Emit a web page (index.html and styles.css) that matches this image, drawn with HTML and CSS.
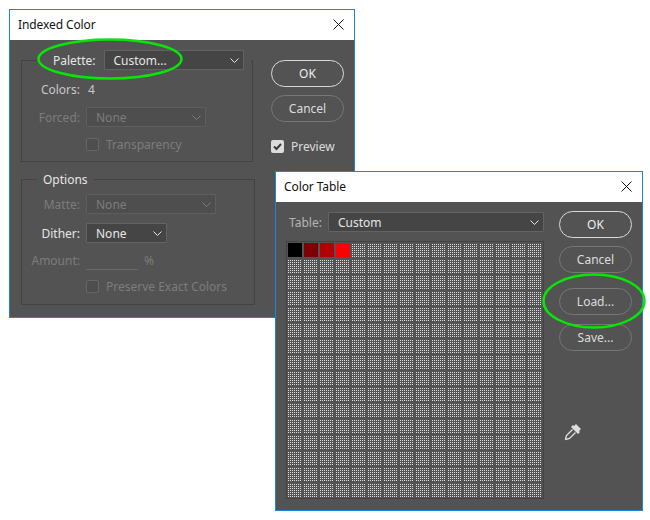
FILE: index.html
```html
<!DOCTYPE html>
<html lang="en">
<head>
    <meta charset="UTF-8">
    <title>Indexed Color and Color Table dialogs</title>
    <link rel="stylesheet" href="styles.css">
</head>
<body>

<div class="window indexed">
    <div class="titlebar">
        <span>Indexed Color</span>
        <svg class="close" viewBox="0 0 11 11"><path d="M0.5 0.5L10.5 10.5M10.5 0.5L0.5 10.5"/></svg>
    </div>
    <div class="panel indexed-panel">
        <div class="groups">
            <fieldset class="group palette-group">
                <legend class="palette-legend">
                    <span class="lbl bright">Palette:</span>
                    <div class="select palette-select bright"><span>Custom...</span><svg class="chev" viewBox="0 0 9 5"><path d="M0.5 0.5L4.5 4.5L8.5 0.5"/></svg></div>
                </legend>
                <div class="row colors-row"><span class="lbl wide colors-lbl">Colors:</span><span class="value">4</span></div>
                <div class="row forced-row">
                    <span class="lbl wide off">Forced:</span>
                    <div class="select forced-select off"><span>None</span><svg class="chev" viewBox="0 0 9 5"><path d="M0.5 0.5L4.5 4.5L8.5 0.5"/></svg></div>
                </div>
                <div class="row check-row off"><span class="box"></span><span>Transparency</span></div>
            </fieldset>
            <fieldset class="group options-group">
                <legend class="options-legend bright">Options</legend>
                <div class="row matte-row">
                    <span class="lbl wide off">Matte:</span>
                    <div class="select matte-select off"><span>None</span><svg class="chev" viewBox="0 0 9 5"><path d="M0.5 0.5L4.5 4.5L8.5 0.5"/></svg></div>
                </div>
                <div class="row dither-row">
                    <span class="lbl wide bright">Dither:</span>
                    <div class="select dither-select bright"><span>None</span><svg class="chev" viewBox="0 0 9 5"><path d="M0.5 0.5L4.5 4.5L8.5 0.5"/></svg></div>
                </div>
                <div class="row amount-row off">
                    <span class="lbl wide">Amount:</span><span class="field"></span><span>%</span>
                </div>
                <div class="row check-row exact-row off"><span class="box"></span><span>Preserve Exact Colors</span></div>
            </fieldset>
        </div>
        <div class="buttons indexed-buttons">
            <div class="btn primary">OK</div>
            <div class="btn">Cancel</div>
            <div class="preview">
                <svg class="checkbox" viewBox="0 0 13 13"><rect width="13" height="13" rx="2" fill="#dcdcdc"/><path d="M3 6.5L5.5 9L10 4" fill="none" stroke="#3a3a3a" stroke-width="2"/></svg>
                <span>Preview</span>
            </div>
        </div>
    </div>
</div>

<div class="window table">
    <div class="titlebar">
        <span>Color Table</span>
        <svg class="close" viewBox="0 0 11 11"><path d="M0.5 0.5L10.5 10.5M10.5 0.5L0.5 10.5"/></svg>
    </div>
    <div class="panel table-panel">
        <div class="table-main">
            <div class="row table-row">
                <span class="lbl">Table:</span>
                <div class="select table-select bright"><span>Custom</span><svg class="chev" viewBox="0 0 9 5"><path d="M0.5 0.5L4.5 4.5L8.5 0.5"/></svg></div>
            </div>
            <div class="swatches">
                <div class="swatch c1"></div>
                <div class="swatch c2"></div>
                <div class="swatch c3"></div>
                <div class="swatch c4"></div>
            </div>
        </div>
        <div class="buttons table-buttons">
            <div class="btn primary">OK</div>
            <div class="btn">Cancel</div>
            <div class="btn load-btn">Load...</div>
            <div class="btn">Save...</div>
            <svg class="dropper" viewBox="0 0 18 18">
                <path d="M12 1L17 6L15 8L16 9L14 11L7 4L9 2L10 3Z" fill="#dcdcdc"/>
                <path d="M8.5 6.5L2.5 12.5L1.5 16L2 16.5L5.5 15.5L11.5 9.5" fill="none" stroke="#dcdcdc" stroke-width="1.4"/>
            </svg>
        </div>
    </div>
</div>

<svg class="ring ring-palette" viewBox="0 0 146 42"><ellipse cx="73" cy="21" rx="71.5" ry="19.5"/></svg>
<svg class="ring ring-load" viewBox="0 0 104 56"><ellipse cx="52" cy="28" rx="50.5" ry="26.5"/></svg>

</body>
</html>
```

FILE: styles.css
```css
body {
    margin: 0;
    width: 650px;
    height: 520px;
    position: relative;
    overflow: hidden;
    background-color: #fff;
    font-family: "Noto Sans", sans-serif;
    font-size: 12px;
    color: #c8c8c8;
}
.window {
    position: absolute;
    box-sizing: border-box;
    border: 1px solid #1c86d6;
    display: flex;
    flex-direction: column;
    background-color: #535353;
}
.indexed {
    left: 9px;
    top: 9px;
    width: 346px;
    height: 309px;
}
.table {
    left: 275px;
    top: 171px;
    width: 368px;
    height: 340px;
}
.titlebar {
    height: 30px;
    flex: none;
    box-sizing: border-box;
    background-color: #fff;
    color: #111;
    display: flex;
    align-items: center;
    justify-content: space-between;
    padding: 0 10px 2px 8px;
    letter-spacing: -0.1px;
}
.close {
    width: 11px;
    height: 11px;
    stroke: #111;
    stroke-width: 1;
    fill: none;
}
.panel {
    flex: 1;
    display: flex;
}
.bright { color: #e6e6e6; }
.off { color: #7c7c7c; }
.row {
    display: flex;
    align-items: center;
}
.lbl { text-align: right; }
.wide {
    width: 58px;
    margin-right: 6px;
    flex: none;
}
.colors-lbl { margin-right: 8px; }
.groups {
    box-sizing: border-box;
    width: 246px;
    padding: 10px 0 0 11px;
    flex: none;
}
.group {
    box-sizing: border-box;
    border: 1px solid #434343;
    margin: 0;
    padding: 0;
    min-width: 0;
}
.palette-group {
    width: 232px;
    height: 112px;
}
.palette-legend {
    display: flex;
    align-items: center;
    padding: 0 6px 0 16px;
    box-sizing: border-box;
    width: 214px;
    margin-left: 15px;
    height: 20px;
}
.palette-legend .lbl { margin-right: 8px; }
.palette-select { width: 140px; }
.options-legend {
    margin-left: 15px;
    padding: 0 6px;
    height: 17px;
    line-height: 17px;
}
.options-group {
    width: 234px;
    height: 134px;
    margin-top: 9px;
}
.select {
    box-sizing: border-box;
    height: 20px;
    border: 1px solid #636363;
    background-color: #454545;
    border-radius: 1px;
    display: flex;
    align-items: center;
    justify-content: space-between;
    padding: 0 4px 0 9px;
}
.select.off {
    border-color: #5e5e5e;
    background-color: #4e4e4e;
}
.chev {
    width: 9px;
    height: 5px;
    fill: none;
    stroke: currentColor;
}
.colors-row { margin-top: 10px; height: 18px; }
.forced-row { margin-top: 9px; }
.forced-select { width: 120px; }
.check-row { margin-left: 64px; }
.box {
    box-sizing: border-box;
    width: 13px;
    height: 13px;
    border: 1px solid #666;
    border-radius: 2px;
    margin-right: 7px;
    background-color: #4e4e4e;
}
.palette-group .check-row { margin-top: 9px; }
.matte-row { margin-top: 6px; }
.matte-select { width: 130px; }
.dither-row { margin-top: 9px; }
.dither-select { width: 81px; }
.amount-row { margin-top: 8px; }
.field {
    width: 52px;
    height: 18px;
    border-bottom: 1px solid #6a6a6a;
    margin-right: 6px;
}
.exact-row { margin-top: 8px; }
.buttons {
    display: flex;
    flex-direction: column;
    flex: none;
}
.btn {
    box-sizing: border-box;
    width: 73px;
    height: 27px;
    border: 1px solid #777;
    border-radius: 14px;
    display: flex;
    align-items: center;
    justify-content: center;
    color: #dcdcdc;
}
.btn.primary {
    border-color: #dadada;
    color: #eee;
}
.indexed-buttons {
    margin-left: 15px;
    padding-top: 20px;
    gap: 8px;
}
.preview {
    display: flex;
    align-items: center;
    gap: 7px;
    margin-top: 8px;
    color: #dcdcdc;
}
.checkbox {
    width: 13px;
    height: 13px;
}
.table-main {
    width: 258px;
    margin-left: 10px;
    padding-top: 10px;
    flex: none;
}
.table-row { height: 20px; }
.table-row .lbl { margin: 0 6px 0 3px; color: #b4b4b4; }
.table-select {
    flex: 1;
}
.swatches {
    margin-top: 9px;
    width: 258px;
    height: 258px;
    box-sizing: border-box;
    border: 1px solid #434343;
    padding: 1px;
    display: flex;
    gap: 2px;
    align-items: flex-start;
    /* 16x16 cells: gap lines laid over a 2px dot pattern */
    background-color: #535353;
    background-image:
        repeating-linear-gradient(90deg, transparent 0 14px, #535353 14px 16px),
        repeating-linear-gradient(180deg, transparent 0 14px, #535353 14px 16px),
        linear-gradient(#535353 50%, transparent 50%),
        linear-gradient(90deg, #e0e0e0 50%, #535353 50%);
    background-size: auto, auto, 2px 2px, 2px 2px;
    background-origin: content-box;
    background-clip: content-box;
}
.swatch {
    width: 14px;
    height: 14px;
}
.c1 { background-color: #000; }
.c2 { background-color: #7f0000; }
.c3 { background-color: #b20000; }
.c4 { background-color: #ff0000; }
.table-buttons {
    margin-left: 15px;
    padding-top: 9px;
    gap: 8px;
}
.load-btn {
    margin-top: 7px;
    margin-bottom: 1px;
}
.dropper {
    width: 18px;
    height: 18px;
    margin: 64px 0 0 5px;
}
.ring {
    position: absolute;
    fill: none;
    stroke: #08e608;
    stroke-width: 2.5;
}
.ring-palette {
    left: 37px;
    top: 38px;
    width: 146px;
    height: 42px;
}
.ring-load {
    left: 542px;
    top: 273px;
    width: 104px;
    height: 56px;
}
```
